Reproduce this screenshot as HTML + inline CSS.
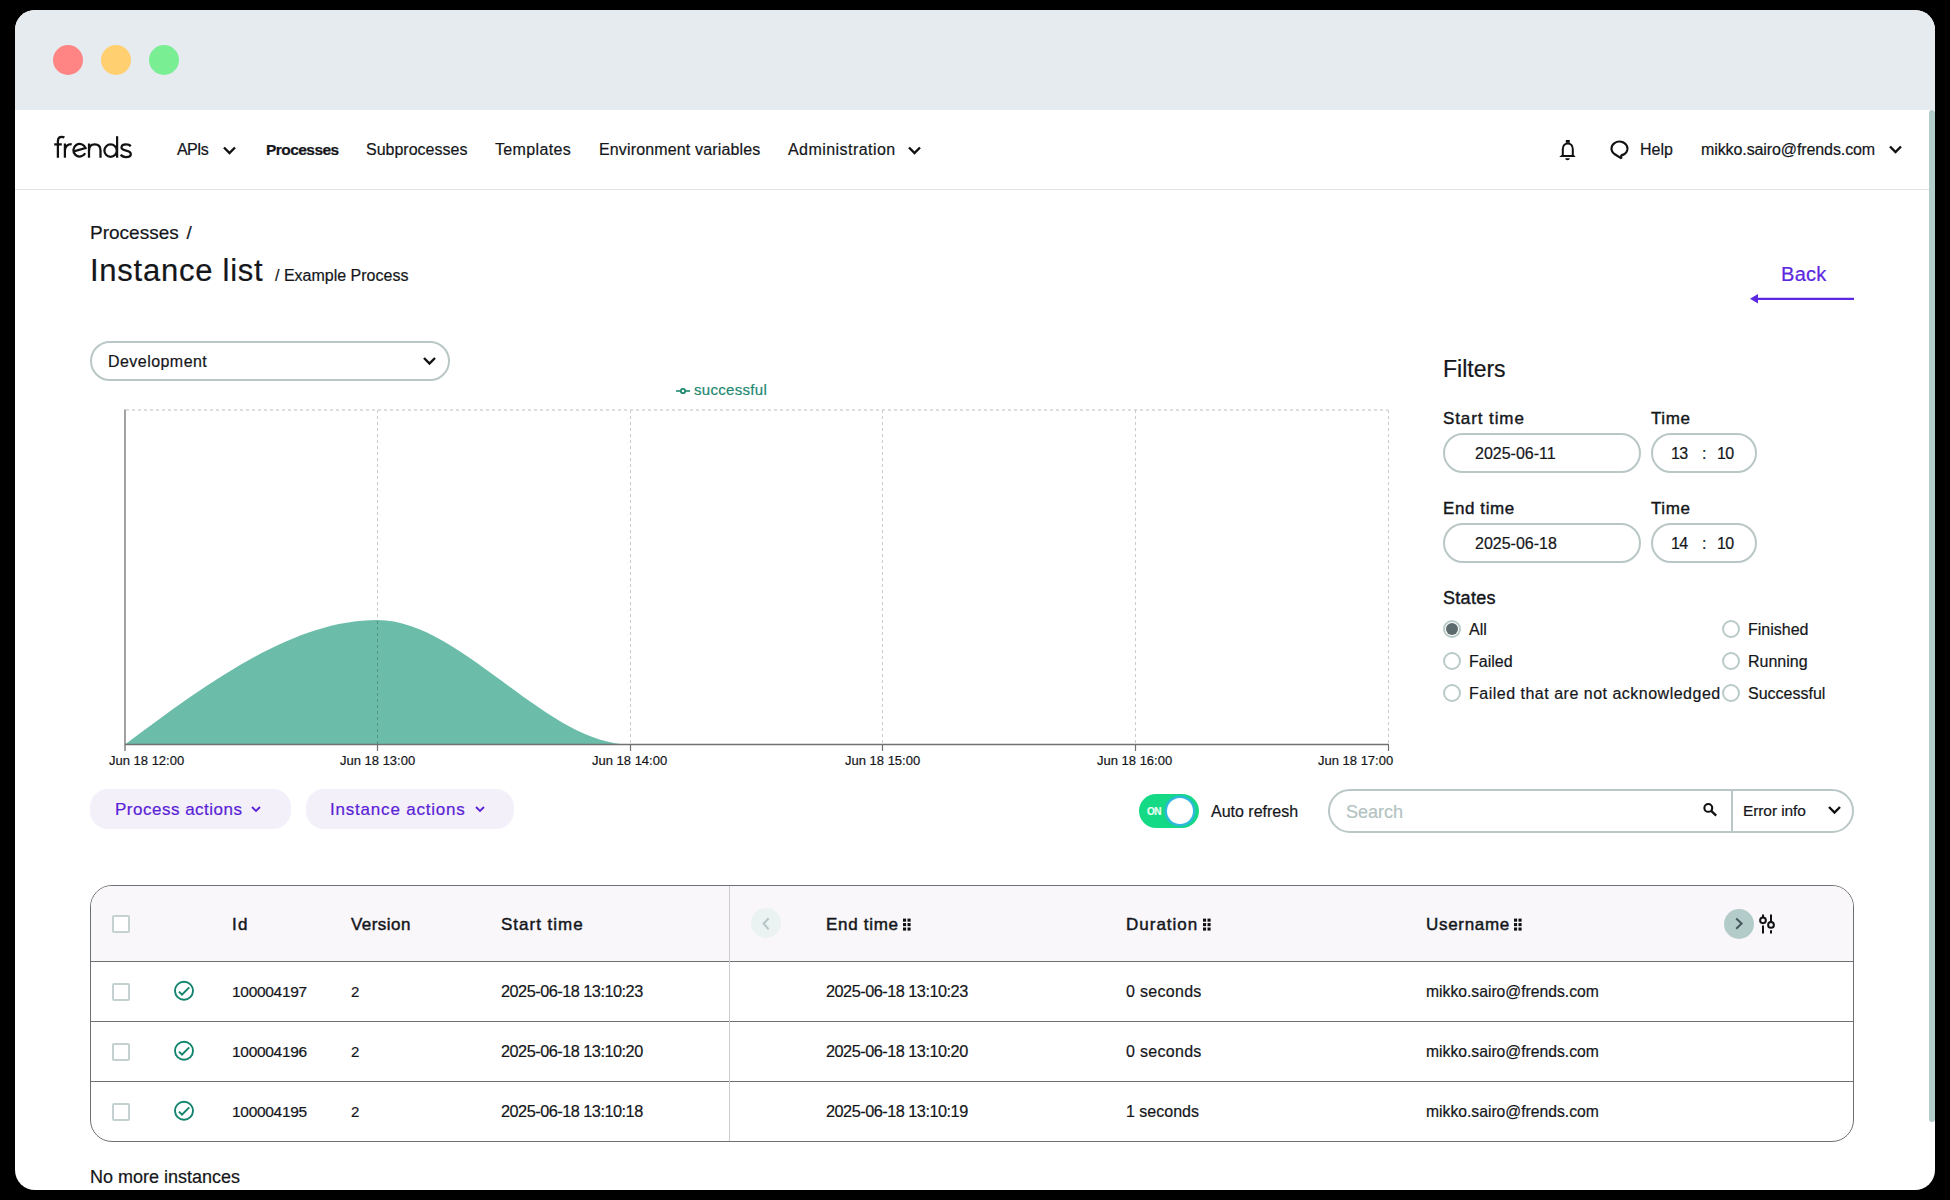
<!DOCTYPE html>
<html><head><meta charset="utf-8">
<style>
*{box-sizing:border-box;margin:0;padding:0}
html,body{width:1950px;height:1200px;overflow:hidden;background:#000;font-family:"Liberation Sans",sans-serif;color:#14161a}
.win{position:absolute;left:15px;top:10px;width:1920px;height:1180px;background:#fff;border-radius:20px;overflow:hidden}
.tbar{position:absolute;left:0;top:0;width:1920px;height:100px;background:#e6ebef}
.dot{position:absolute;top:35px;width:30px;height:30px;border-radius:50%}
.t{position:absolute;white-space:nowrap;line-height:1;-webkit-text-stroke:0.2px currentColor}
.nav{position:absolute;left:15px;top:110px;width:1914px;height:80px;border-bottom:1px solid #dfe5e7}
.sb{position:absolute;left:1929px;top:110px;width:6px;height:1012px;background:#b3cccc;border-radius:3px}
.pill{position:absolute;border:2px solid #b9c7c6;border-radius:999px;background:#fff}
.radio{position:absolute;width:18px;height:18px;border-radius:50%;border:2px solid #b9cac9;background:#fff}
.cb{position:absolute;width:18px;height:18px;border:2px solid #c4d1d0;border-radius:2px;background:#fff}
.btn{position:absolute;background:#f3f0fa;border-radius:18px;height:40px;top:789px}
.purple{color:#5a22d6}
.hd{font-weight:normal;-webkit-text-stroke:0.45px #14161a;letter-spacing:0.4px}
</style></head><body>
<div class="win">
  <div class="tbar">
    <div class="dot" style="left:38px;background:#ff8585"></div>
    <div class="dot" style="left:86px;background:#ffcf70"></div>
    <div class="dot" style="left:134px;background:#79ee93"></div>
  </div>
</div>
<div class="nav"></div>
<div class="sb"></div>

<!-- NAV -->
<svg style="position:absolute;left:50px;top:130px" width="90" height="35" viewBox="0 0 90 35"><g fill="none" stroke="#111" stroke-width="2.25">
<path d="M7.9 27.7 V11 C7.9 8 9.6 6.8 11.9 6.8 C12.9 6.8 13.7 7.1 14.4 7.5"/><path d="M4.2 14.4 H11.8"/>
<path d="M14.9 27.7 V13.5"/><path d="M14.9 20 C15.4 16 17.8 14.2 21.7 14.1"/>
<path d="M22.8 21.7 L35.6 18.1 A6.3 6.3 0 1 0 35.2 23.3"/>
<path d="M39 27.7 V13.5"/><path d="M39 20.5 C39 16.5 41.3 14.4 44.7 14.4 C48.2 14.4 50.5 16.5 50.5 20.5 V27.7"/>
<circle cx="60.6" cy="20.6" r="6.2"/><path d="M67.1 6.2 V27.7"/>
<path d="M80.6 16.3 C79.8 15 78.2 14.4 76 14.4 C73.2 14.4 71.5 15.6 71.5 17.5 C71.5 19.6 73.8 20.1 76.2 20.6 C79 21.2 80.8 22 80.8 24.2 C80.8 26.2 78.8 27 76 27 C73.5 27 71.6 26.1 70.8 24.6"/>
</g></svg>
<div class="t" style="left:177px;top:141.5px;font-size:16px;letter-spacing:-0.7px">APIs</div>
<svg style="position:absolute;left:222px;top:144.5px" width="15" height="11" viewBox="0 0 15 11"><path d="M2 2.5 L7.5 8 L13 2.5" fill="none" stroke="#111" stroke-width="2.4"/></svg>
<div class="t" style="left:266px;top:141.8px;font-size:15.5px;font-weight:bold;letter-spacing:-0.55px">Processes</div>
<div class="t" style="left:366px;top:142px;font-size:16px">Subprocesses</div>
<div class="t" style="left:495px;top:142px;font-size:16px;letter-spacing:0.35px">Templates</div>
<div class="t" style="left:599px;top:142px;font-size:16px;letter-spacing:0.15px">Environment variables</div>
<div class="t" style="left:788px;top:142px;font-size:16px;letter-spacing:0.45px">Administration</div>
<svg style="position:absolute;left:907px;top:144.5px" width="15" height="11" viewBox="0 0 15 11"><path d="M2 2.5 L7.5 8 L13 2.5" fill="none" stroke="#111" stroke-width="2.4"/></svg>

<svg style="position:absolute;left:1556px;top:138px" width="24" height="25" viewBox="0 0 24 25"><path d="M6.8 17.5 V11.2 C6.8 7.6 9 5.4 11.8 5.4 C14.6 5.4 16.8 7.6 16.8 11.2 V17.5" fill="none" stroke="#111" stroke-width="2"/><rect x="9.8" y="2" width="4" height="2.8" fill="#111"/><path d="M3.2 18.9 L5.6 17 H18 L19.6 18.9 Z" fill="#111"/><path d="M9.2 20.3 H13.8 A2.3 2 0 0 1 9.2 20.3 Z" fill="#111"/></svg>
<svg style="position:absolute;left:1606px;top:138px" width="26" height="24" viewBox="0 0 26 24"><path d="M15.4 20.4 L15.2 17.4 A8 7 0 1 0 8.4 16 Z" fill="none" stroke="#111" stroke-width="2.1" stroke-linejoin="bevel"/></svg>
<div class="t" style="left:1640px;top:142px;font-size:16px">Help</div>
<div class="t" style="left:1701px;top:142px;font-size:16px;letter-spacing:-0.1px">mikko.sairo@frends.com</div>
<svg style="position:absolute;left:1888px;top:144px" width="15" height="11" viewBox="0 0 15 11"><path d="M2 2.5 L7.5 8 L13 2.5" fill="none" stroke="#111" stroke-width="2.4"/></svg>

<!-- HEADER -->
<div class="t" style="left:90px;top:223px;font-size:19px;word-spacing:2.5px">Processes /</div>
<div class="t" style="left:90px;top:255px;font-size:31px;letter-spacing:0.75px">Instance list</div>
<div class="t" style="left:275px;top:268px;font-size:16px">/ Example Process</div>
<div class="t purple" style="left:1781px;top:264px;font-size:20px;letter-spacing:0.3px;color:#5b27e0">Back</div>
<svg style="position:absolute;left:1748px;top:290px" width="110" height="18" viewBox="0 0 110 18"><path d="M10 8.8 H106" stroke="#5b27e0" stroke-width="2.2"/><path d="M2 8.8 L10 4 V13.6 Z" fill="#5b27e0"/></svg>

<!-- DROPDOWN -->
<div class="pill" style="left:90px;top:341px;width:360px;height:40px"></div>
<div class="t" style="left:108px;top:353.5px;font-size:16px;letter-spacing:0.45px">Development</div>
<svg style="position:absolute;left:421px;top:354px" width="17" height="14" viewBox="0 0 17 14"><path d="M3 4 L8.5 9.5 L14 4" fill="none" stroke="#111" stroke-width="2.4"/></svg>

<!-- LEGEND -->
<svg style="position:absolute;left:674px;top:383px" width="18" height="14" viewBox="0 0 18 14"><path d="M2 8 H16" stroke="#1f8a70" stroke-width="1.6"/><circle cx="9" cy="8" r="2.2" fill="#fff" stroke="#1f8a70" stroke-width="1.8"/></svg>
<div class="t" style="left:694px;top:382px;font-size:15px;color:#22886f;letter-spacing:0.3px">successful</div>

<!-- CHART -->
<svg style="position:absolute;left:0;top:0" width="1420" height="780">
  <g stroke="#bdbdbd" stroke-width="1.2" stroke-dasharray="3 3" fill="none">
    <path d="M126 410 H1388"/>
  </g>
  <g stroke="#c9cbcc" stroke-width="1" stroke-dasharray="3 3" fill="none">
    <path d="M377.5 410 V744"/>
    <path d="M630.5 410 V744"/>
    <path d="M882.5 410 V744"/>
    <path d="M1135.5 410 V744"/>
    <path d="M1388.5 410 V744"/>
  </g>
  <path d="M125 744.5 C209 682 293 620 377.5 620 C461 620 546 744.5 630 744.5 Z" fill="#6bbdaa"/>
  <g stroke="#4f9383" stroke-width="1" stroke-dasharray="3 3" fill="none"><path d="M377.5 621 V744"/></g>
  <g stroke="#6f7172" fill="none">
    <path d="M125 409.5 V751" stroke-width="1.3"/>
    <path d="M125 744.4 H1389" stroke-width="1.5"/>
    <path d="M377.5 745 V751 M630.5 745 V751 M882.5 745 V751 M1135.5 745 V751 M1388.5 745 V751" stroke-width="1.2"/>
  </g>
</svg>
<div class="t" style="left:109px;top:754px;font-size:13px;letter-spacing:0px">Jun 18 12:00</div>
<div class="t" style="left:340px;top:754px;font-size:13px;letter-spacing:0px">Jun 18 13:00</div>
<div class="t" style="left:592px;top:754px;font-size:13px;letter-spacing:0px">Jun 18 14:00</div>
<div class="t" style="left:845px;top:754px;font-size:13px;letter-spacing:0px">Jun 18 15:00</div>
<div class="t" style="left:1097px;top:754px;font-size:13px;letter-spacing:0px">Jun 18 16:00</div>
<div class="t" style="left:1318px;top:754px;font-size:13px;letter-spacing:0px">Jun 18 17:00</div>

<!-- FILTERS -->
<div class="t" style="left:1443px;top:358px;font-size:23px">Filters</div>
<div class="t" style="left:1443px;top:410px;font-size:17px;letter-spacing:0.9px;-webkit-text-stroke:0.4px #14161a">Start time</div>
<div class="t" style="left:1651px;top:410px;font-size:17px;letter-spacing:0.6px;-webkit-text-stroke:0.4px #14161a">Time</div>
<div class="pill" style="left:1443px;top:433px;width:198px;height:40px"></div>
<div class="t" style="left:1475px;top:446px;font-size:16px">2025-06-11</div>
<div class="pill" style="left:1651px;top:433px;width:106px;height:40px"></div>
<div class="t" style="left:1671px;top:446px;font-size:16px;letter-spacing:-0.6px">13</div>
<div class="t" style="left:1702px;top:446px;font-size:16px">:</div>
<div class="t" style="left:1717px;top:446px;font-size:16px;letter-spacing:-0.6px">10</div>

<div class="t" style="left:1443px;top:500px;font-size:17px;letter-spacing:0.6px;-webkit-text-stroke:0.4px #14161a">End time</div>
<div class="t" style="left:1651px;top:500px;font-size:17px;letter-spacing:0.6px;-webkit-text-stroke:0.4px #14161a">Time</div>
<div class="pill" style="left:1443px;top:523px;width:198px;height:40px"></div>
<div class="t" style="left:1475px;top:536px;font-size:16px">2025-06-18</div>
<div class="pill" style="left:1651px;top:523px;width:106px;height:40px"></div>
<div class="t" style="left:1671px;top:536px;font-size:16px;letter-spacing:-0.6px">14</div>
<div class="t" style="left:1702px;top:536px;font-size:16px">:</div>
<div class="t" style="left:1717px;top:536px;font-size:16px;letter-spacing:-0.6px">10</div>

<div class="t" style="left:1443px;top:589px;font-size:18px;letter-spacing:0.3px;-webkit-text-stroke:0.4px #14161a">States</div>
<div class="radio" style="left:1443px;top:620px"><div style="position:absolute;left:1px;top:1px;width:12px;height:12px;border-radius:50%;background:#5b6a6d"></div></div>
<div class="t" style="left:1469px;top:622px;font-size:16px">All</div>
<div class="radio" style="left:1443px;top:652px"></div>
<div class="t" style="left:1469px;top:654px;font-size:16px">Failed</div>
<div class="radio" style="left:1443px;top:684px"></div>
<div class="t" style="left:1469px;top:686px;font-size:16px;letter-spacing:0.5px">Failed that are not acknowledged</div>
<div class="radio" style="left:1722px;top:620px"></div>
<div class="t" style="left:1748px;top:622px;font-size:16px">Finished</div>
<div class="radio" style="left:1722px;top:652px"></div>
<div class="t" style="left:1748px;top:654px;font-size:16px">Running</div>
<div class="radio" style="left:1722px;top:684px"></div>
<div class="t" style="left:1748px;top:686px;font-size:16px">Successful</div>

<!-- ACTIONS -->
<div class="btn" style="left:90px;width:201px"></div>
<div class="t purple" style="left:115px;top:801px;font-size:17px;letter-spacing:0.5px">Process actions</div>
<svg style="position:absolute;left:250px;top:804px" width="12" height="10" viewBox="0 0 12 10"><path d="M2 3 L6 7 L10 3" fill="none" stroke="#5a22d6" stroke-width="1.8"/></svg>
<div class="btn" style="left:306px;width:208px"></div>
<div class="t purple" style="left:330px;top:801px;font-size:17px;letter-spacing:0.8px">Instance actions</div>
<svg style="position:absolute;left:474px;top:804px" width="12" height="10" viewBox="0 0 12 10"><path d="M2 3 L6 7 L10 3" fill="none" stroke="#5a22d6" stroke-width="1.8"/></svg>

<div style="position:absolute;left:1139px;top:794px;width:60px;height:34px;border-radius:17px;background:#14d985"></div>
<div class="t" style="left:1147px;top:807px;font-size:10px;font-weight:bold;color:#e8fff2;letter-spacing:-0.5px">ON</div>
<div style="position:absolute;left:1165px;top:796px;width:29.5px;height:30px;border-radius:50%;background:#2fb9dc;box-shadow:0 0 1.5px 0.5px #28c0c0"></div><div style="position:absolute;left:1166.7px;top:797.9px;width:26.2px;height:26.2px;border-radius:50%;background:#fff"></div>
<div class="t" style="left:1211px;top:804px;font-size:16px">Auto refresh</div>

<div class="pill" style="left:1328px;top:789px;width:526px;height:44px"></div>
<div style="position:absolute;left:1731px;top:791px;width:2px;height:40px;background:#b9c7c6"></div>
<div class="t" style="left:1346px;top:803px;font-size:18px;color:#b3c3c2">Search</div>
<svg style="position:absolute;left:1701px;top:801px" width="18" height="18" viewBox="0 0 18 18"><circle cx="7.3" cy="6.9" r="3.9" fill="none" stroke="#111" stroke-width="2.1"/><path d="M10.2 9.9 L15.2 14.6" stroke="#111" stroke-width="2.3" stroke-linecap="butt"/></svg>
<div class="t" style="left:1743px;top:803px;font-size:15.5px;letter-spacing:-0.1px">Error info</div>
<svg style="position:absolute;left:1825.5px;top:802.5px" width="17" height="14" viewBox="0 0 17 14"><path d="M3 4 L8.5 9.5 L14 4" fill="none" stroke="#111" stroke-width="2.4"/></svg>

<!-- TABLE -->
<div style="position:absolute;left:90px;top:885px;width:1764px;height:257px;border:1px solid #6d7072;border-radius:22px;overflow:hidden;background:#fff">
  <div style="position:absolute;left:0;top:0;width:100%;height:76px;background:#f9f7fa;border-bottom:1px solid #6d7072"></div>
  <div style="position:absolute;left:0;top:135px;width:100%;height:1px;background:#6d7072"></div>
  <div style="position:absolute;left:0;top:195px;width:100%;height:1px;background:#6d7072"></div>
  <div style="position:absolute;left:638px;top:0;width:1px;height:100%;background:#cacccd;z-index:2"></div>
</div>
<div class="cb" style="left:112px;top:915px"></div>
<div class="t hd" style="left:232px;top:916px;font-size:17px;letter-spacing:1.2px">Id</div>
<div class="t hd" style="left:351px;top:916px;font-size:17px;letter-spacing:0.45px">Version</div>
<div class="t hd" style="left:501px;top:916px;font-size:17px;letter-spacing:1px">Start time</div>
<div style="position:absolute;left:751px;top:908px;width:30px;height:30px;border-radius:50%;background:#ebf3f2"></div>
<svg style="position:absolute;left:759px;top:915px" width="14" height="18" viewBox="0 0 14 18"><path d="M9.6 3.3 L4.6 8.75 L9.6 14.2" fill="none" stroke="#b5c6c4" stroke-width="2"/></svg>
<div class="t hd" style="left:826px;top:916px;font-size:17px;letter-spacing:0.7px">End time</div>
<div class="t hd" style="left:1126px;top:916px;font-size:17px;letter-spacing:1px">Duration</div>
<div class="t hd" style="left:1426px;top:916px;font-size:17px;letter-spacing:0.7px">Username</div>
<svg style="position:absolute;left:902px;top:917px" width="10" height="15" viewBox="0 0 10 15"><g fill="#111"><rect x="1" y="1.6" width="3.1" height="3.1"/><rect x="5.5" y="1.6" width="3.1" height="3.1"/><rect x="1" y="6.05" width="3.1" height="3.1"/><rect x="5.5" y="6.05" width="3.1" height="3.1"/><rect x="1" y="10.5" width="3.1" height="3.1"/><rect x="5.5" y="10.5" width="3.1" height="3.1"/></g></svg><svg style="position:absolute;left:1202px;top:917px" width="10" height="15" viewBox="0 0 10 15"><g fill="#111"><rect x="1" y="1.6" width="3.1" height="3.1"/><rect x="5.5" y="1.6" width="3.1" height="3.1"/><rect x="1" y="6.05" width="3.1" height="3.1"/><rect x="5.5" y="6.05" width="3.1" height="3.1"/><rect x="1" y="10.5" width="3.1" height="3.1"/><rect x="5.5" y="10.5" width="3.1" height="3.1"/></g></svg><svg style="position:absolute;left:1513px;top:917px" width="10" height="15" viewBox="0 0 10 15"><g fill="#111"><rect x="1" y="1.6" width="3.1" height="3.1"/><rect x="5.5" y="1.6" width="3.1" height="3.1"/><rect x="1" y="6.05" width="3.1" height="3.1"/><rect x="5.5" y="6.05" width="3.1" height="3.1"/><rect x="1" y="10.5" width="3.1" height="3.1"/><rect x="5.5" y="10.5" width="3.1" height="3.1"/></g></svg>
<div style="position:absolute;left:1724px;top:909px;width:30px;height:30px;border-radius:50%;background:#b3cbc9"></div>
<svg style="position:absolute;left:1732px;top:916px" width="14" height="16" viewBox="0 0 14 16"><path d="M4.2 2.5 L9.6 7.6 L4.2 12.7" fill="none" stroke="#44575a" stroke-width="2"/></svg>
<svg style="position:absolute;left:1758px;top:913px" width="20" height="22" viewBox="0 0 20 22"><g fill="none" stroke="#111" stroke-width="2"><path d="M5 1.4 V4.4 M5 12.4 V20.6 M13 1.4 V9 M13 17.3 V20.6"/><circle cx="5" cy="7.3" r="2.85"/><circle cx="13" cy="11.9" r="2.85"/></g></svg>

<!-- ROWS -->
<div class="cb" style="left:112px;top:983px"></div>
<svg style="position:absolute;left:173px;top:980px" width="22" height="22" viewBox="0 0 22 22"><circle cx="11" cy="10.8" r="9" fill="none" stroke="#12846e" stroke-width="1.9"/><path d="M6 11.6 L9 14.6 L16.2 7.4" fill="none" stroke="#12846e" stroke-width="2"/></svg>
<div class="t" style="left:232px;top:984px;font-size:15.5px;letter-spacing:-0.3px">100004197</div>
<div class="t" style="left:351px;top:984px;font-size:15px">2</div>
<div class="t" style="left:501px;top:983px;font-size:16.3px;letter-spacing:-0.5px">2025-06-18 13:10:23</div>
<div class="t" style="left:826px;top:983px;font-size:16.3px;letter-spacing:-0.5px">2025-06-18 13:10:23</div>
<div class="t" style="left:1126px;top:984px;font-size:16px;letter-spacing:0.3px">0 seconds</div>
<div class="t" style="left:1426px;top:984px;font-size:15.7px">mikko.sairo@frends.com</div>

<div class="cb" style="left:112px;top:1043px"></div>
<svg style="position:absolute;left:173px;top:1040px" width="22" height="22" viewBox="0 0 22 22"><circle cx="11" cy="10.8" r="9" fill="none" stroke="#12846e" stroke-width="1.9"/><path d="M6 11.6 L9 14.6 L16.2 7.4" fill="none" stroke="#12846e" stroke-width="2"/></svg>
<div class="t" style="left:232px;top:1044px;font-size:15.5px;letter-spacing:-0.3px">100004196</div>
<div class="t" style="left:351px;top:1044px;font-size:15px">2</div>
<div class="t" style="left:501px;top:1043px;font-size:16.3px;letter-spacing:-0.5px">2025-06-18 13:10:20</div>
<div class="t" style="left:826px;top:1043px;font-size:16.3px;letter-spacing:-0.5px">2025-06-18 13:10:20</div>
<div class="t" style="left:1126px;top:1044px;font-size:16px;letter-spacing:0.3px">0 seconds</div>
<div class="t" style="left:1426px;top:1044px;font-size:15.7px">mikko.sairo@frends.com</div>

<div class="cb" style="left:112px;top:1103px"></div>
<svg style="position:absolute;left:173px;top:1100px" width="22" height="22" viewBox="0 0 22 22"><circle cx="11" cy="10.8" r="9" fill="none" stroke="#12846e" stroke-width="1.9"/><path d="M6 11.6 L9 14.6 L16.2 7.4" fill="none" stroke="#12846e" stroke-width="2"/></svg>
<div class="t" style="left:232px;top:1104px;font-size:15.5px;letter-spacing:-0.3px">100004195</div>
<div class="t" style="left:351px;top:1104px;font-size:15px">2</div>
<div class="t" style="left:501px;top:1103px;font-size:16.3px;letter-spacing:-0.5px">2025-06-18 13:10:18</div>
<div class="t" style="left:826px;top:1103px;font-size:16.3px;letter-spacing:-0.5px">2025-06-18 13:10:19</div>
<div class="t" style="left:1126px;top:1104px;font-size:16px">1 seconds</div>
<div class="t" style="left:1426px;top:1104px;font-size:15.7px">mikko.sairo@frends.com</div>

<div class="t" style="left:90px;top:1168px;font-size:18px">No more instances</div>
</body></html>
